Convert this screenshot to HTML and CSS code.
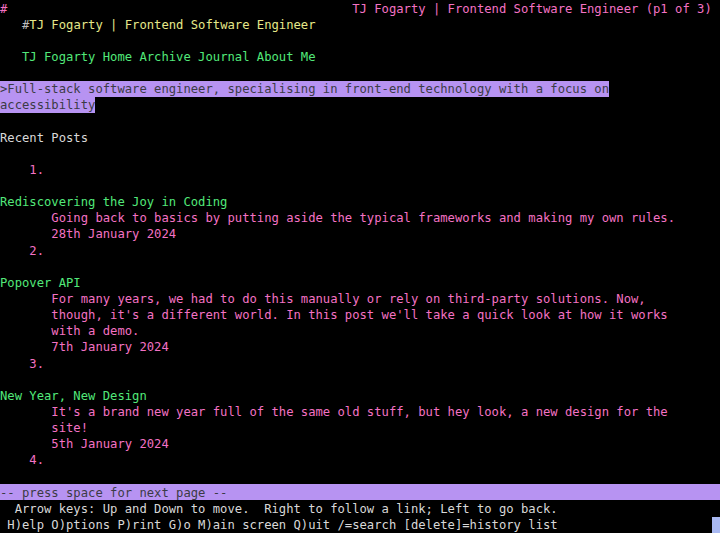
FILE: index.html
```html
<!DOCTYPE html>
<html>
<head>
<meta charset="utf-8">
<link rel="stylesheet" href="styles.css">
</head>
<body>
<div class="term">
<div class="row"><span class="pink">#                                               TJ Fogarty | Frontend Software Engineer (p1 of 3)</span></div>
<div class="row">   <span class="grey">#</span><span class="yellow">TJ Fogarty | Frontend Software Engineer</span></div>
<div class="row"></div>
<div class="row">   <span class="green">TJ Fogarty Home Archive Journal About Me</span></div>
<div class="row"></div>
<div class="row"><span class="hl">&gt;Full-stack software engineer, specialising in front-end technology with a focus on</span></div>
<div class="row"><span class="hl">accessibility</span></div>
<div class="row"></div>
<div class="row"><span class="light">Recent Posts</span></div>
<div class="row"></div>
<div class="row pink">    1.</div>
<div class="row"></div>
<div class="row green">Rediscovering the Joy in Coding</div>
<div class="row pink">       Going back to basics by putting aside the typical frameworks and making my own rules.</div>
<div class="row pink">       28th January 2024</div>
<div class="row pink">    2.</div>
<div class="row"></div>
<div class="row green">Popover API</div>
<div class="row pink">       For many years, we had to do this manually or rely on third-party solutions. Now,</div>
<div class="row pink">       though, it's a different world. In this post we'll take a quick look at how it works</div>
<div class="row pink">       with a demo.</div>
<div class="row pink">       7th January 2024</div>
<div class="row pink">    3.</div>
<div class="row"></div>
<div class="row green">New Year, New Design</div>
<div class="row pink">       It's a brand new year full of the same old stuff, but hey look, a new design for the</div>
<div class="row pink">       site!</div>
<div class="row pink">       5th January 2024</div>
<div class="row pink">    4.</div>
<div class="row"></div>
<div class="row status">-- press space for next page --</div>
<div class="row light">  Arrow keys: Up and Down to move.  Right to follow a link; Left to go back.</div>
<div class="row light last"><span> H)elp O)ptions P)rint G)o M)ain screen Q)uit /=search [delete]=history list</span><span class="cursor"></span></div>
</div>
</body>
</html>
```
FILE: styles.css
```css
html, body {
  margin: 0;
  padding: 0;
  background: #000;
}
.term {
  width: 720px;
  height: 533px;
  overflow: hidden;
  background: #000;
  font-family: "DejaVu Sans Mono", "Liberation Mono", monospace;
  font-size: 12.2px;
  color: #d6d6d6;
}
.row {
  box-sizing: border-box;
  height: 16.15px;
  padding-top: 1.5px;
  line-height: 14.65px;
  white-space: pre;
}
.pink { color: #f472c4; }
.green { color: #52e87a; }
.yellow { color: #e6e88a; }
.grey { color: #bdbdbd; }
.light { color: #d8d8d8; }
.hl {
  display: inline-block;
  vertical-align: top;
  box-sizing: border-box;
  height: 16.15px;
  margin-top: -1.5px;
  padding-top: 1.5px;
  line-height: 14.65px;
  background: #b793f2;
  color: #3b3b45;
}
.status {
  background: #b793f2;
  color: #3b3b45;
}
.last {
  display: flex;
}
.cursor {
  margin-left: auto;
  margin-top: -1.5px;
  width: 7.7px;
  height: 16.15px;
  background: #a9b9f2;
}
```
